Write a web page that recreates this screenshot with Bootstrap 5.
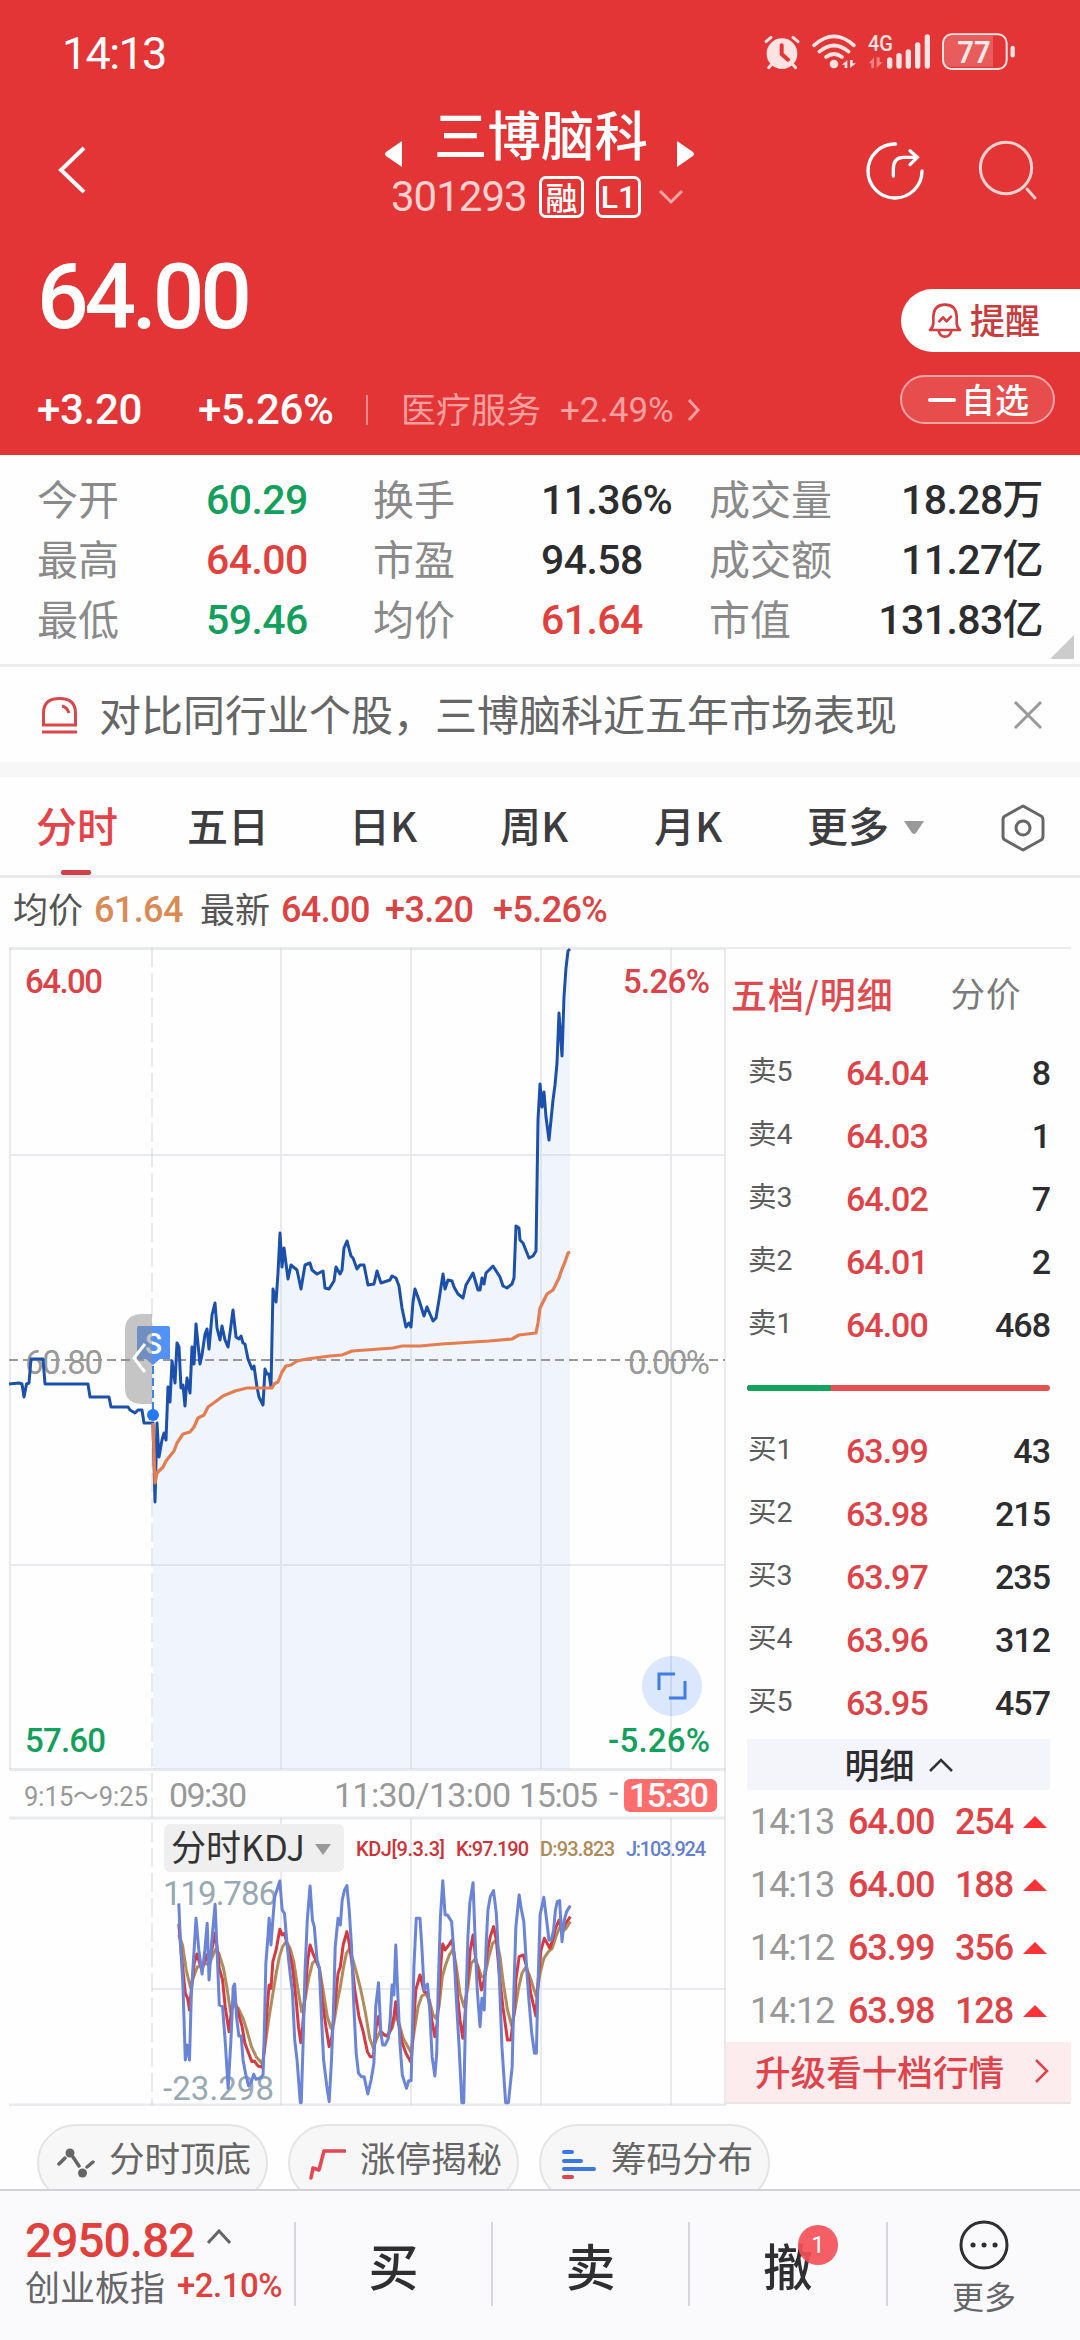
<!DOCTYPE html>
<html lang="zh-CN">
<head>
<meta charset="utf-8">
<meta name="viewport" content="width=device-width, initial-scale=1">
<title>三博脑科 301293</title>
<link href="https://cdn.jsdelivr.net/npm/bootstrap@5.3.0/dist/css/bootstrap.min.css" rel="stylesheet">
<style>
  html, body { width: 1080px; height: 2340px; overflow: hidden; }
  body { background: #fefefe; font-family: Roboto, "Noto Sans CJK SC", sans-serif; line-height: 1; color: #2d2d2f; }
  svg { display: block; flex: none; }
  .cn { font-family: "Noto Sans CJK SC", sans-serif; }
  .lab.cn, .sector.cn { padding-bottom: 5px; }
  .cells { display: grid; align-items: center; white-space: nowrap; }
  .up { color: #e2403c; }
  .down { color: #13a05c; }

  /* header */
  .quote-head { height: 455px; background: #e33536; color: #fff; }
  .status-row { height: 106px; padding: 0 62px; }
  .clock { font-size: 45px; letter-spacing: -1.7px; }
  .status-icons { margin: 0 -62px 0 0; }
  .title-row { height: 130px; grid-template-columns: 58px 326px 312px 168px 113px 1fr; }
  .name-block { margin-top: -12px; }
  .stock-name { font-size: 53.500px; font-weight: 500; margin: 0 29px 9px 32px; }
  .stock-code { font-size: 42px; letter-spacing: -1px; color: #ffd0d0; width: 148px; }
  .tagbox { width: 45px; height: 42px; border: 3px solid #fff; border-radius: 7px; font-size: 32px; font-weight: 500; margin-right: 12px; }
  .tagbox.cn { padding-bottom: 3px; }
  .big-price { font-size: 91px; font-weight: 500; letter-spacing: -4.3px; padding-left: 37px; width: 400px; }
  .remind { width: 179px; height: 63px; border-radius: 32px 0 0 32px; background: #fff; color: #c93b3c; font-size: 35px; font-weight: 500; padding: 0 0 4px 27px; }
  .watch { width: 155px; height: 49px; border-radius: 25px; border: 2px solid #f6a3a3; background: #e84d4e; font-size: 34px; font-weight: 500; padding: 0 0 2px 26px; }
  .change-row { grid-template-columns: 161px 168px 35px 159px 127px 1fr; padding-left: 37px; font-size: 42px; font-weight: 500; letter-spacing: -.3px; height: 60px; }
  .sector { font-size: 35px; color: #ff9f9f; font-weight: 400; letter-spacing: 0; }

  /* statistics */
  .stats { height: 212px; padding: 15px 37px 0; border-bottom: 3px solid #ececec; }
  .stats .cells { grid-template-columns: 169px 167px 168px 168px 131px 1fr; height: 60px; font-size: 41px; font-weight: 500; letter-spacing: -.6px; }
  .stats .lab { color: #8a8a8a; font-weight: 400; letter-spacing: 0; }
  .fold { right: 6px; top: 180px; }
  .notice { height: 95px; padding: 0 37px 0 41px; color: #666; font-size: 42px; }
  .gap-band { height: 15px; background: #f7f7f7; }

  /* period tabs */
  .period { height: 101px; grid-template-columns: 151px 162px 151px 154px 153px 96px 98px 1fr; padding-left: 36px; font-size: 41px; font-weight: 500; color: #3d3d3f; border-bottom: 3px solid #e9e9e9; }
  .period > span { padding-bottom: 4px; }
  .period .on { color: #e64349; }
  .period .on::after { content: ""; position: absolute; left: 25px; top: 66px; width: 30px; height: 5px; border-radius: 2px; background: #d3404a; }
  .legend-row { height: 69px; grid-template-columns: 81px 106px 81px 104px 108px 1fr; padding: 0 0 6px 13px; font-size: 36px; font-weight: 500; letter-spacing: -.6px; color: #dc4343; }
  .legend-row .lab { font-size: 35px; color: #555; font-weight: 400; letter-spacing: 0; }

  /* chart and order book */
  .board { height: 1159px; }
  .book { width: 354px; position: relative; }
  .book-tabs { height: 94px; padding: 0 0 5px 5px; border-top: 2px solid #ececec; margin-right: 9px; font-size: 36px; letter-spacing: .9px; color: #e04a4f; font-weight: 500; }
  .book-tabs .other { margin-left: 57px; color: #7a7a7a; font-weight: 400; font-size: 34.500px; }
  .level { height: 63px; grid-template-columns: 98px 100px 1fr; padding: 0 30px 0 22px; font-size: 34px; font-weight: 500; letter-spacing: -1px; }
  .level .lab { font-size: 28.500px; color: #5c5c5c; font-weight: 400; letter-spacing: 0; }
  .level .px { color: #df4348; }
  .ratio { width: 303px; height: 6px; margin: 29px 30px 28px 21px; border-radius: 3px; background: #e84f50; }
  .ratio .progress-bar { background: #12a35d; }
  .detail-head { height: 51px; margin: 5px 30px 0 21px; padding-bottom: 3px; background: #f3f5fa; font-size: 35px; font-weight: 500; }
  .tick { height: 63px; grid-template-columns: 98px 104px 61px 1fr; padding-left: 24px; font-size: 36px; font-weight: 500; color: #df4348; letter-spacing: -1.1px; }
  .tick svg { margin-left: 10px; }
  .tick .lab { color: #999; font-weight: 400; }
  .upgrade { height: 62px; margin-right: 9px; padding: 0 22px 2px 29px; background: #fdecee; color: #e0434a; font-size: 35.6px; font-weight: 500; border-bottom: 2px solid #e6e6e6; }

  /* tool chips and trade bar */
  .chips { height: 83px; padding: 18px 37px 0; overflow: hidden; gap: 20px; }
  .chip { width: 231px; height: 78px; flex: none; padding: 13px 0 0 18px; border: 2px solid #e4e4e4; border-radius: 39px; background: #f7f7f7; color: #666; font-size: 35.500px; }
  .chip svg { margin: 9px 14px 0 0; }
  .trade { height: 151px; background: #fafafd; border-top: 2px solid #d2d2d5; grid-template-columns: 294px 197px 197px 198px 1fr; }
  .trade > div { height: 84px; margin-top: -3px; }
  .trade > div + div { border-left: 2px solid #d8d8dc; }
  .index-val { font-size: 48px; font-weight: 500; letter-spacing: -1.1px; }
  .action { font-size: 50px; font-weight: 500; color: #2f2f31; }
  .dot { left: 108px; top: 3px; width: 40px; height: 40px; background: rgba(245,80,88,.92); font: 24px Roboto, sans-serif; }
</style>
</head>
<body>

<header class="quote-head">
  <div class="status-row d-flex align-items-center justify-content-between">
    <span class="clock">14:13</span>
    <svg class="status-icons" width="340" height="66" viewBox="0 0 1020 198" fill="none" stroke="#ffe3e3" stroke-linecap="round">
      <circle cx="126" cy="101" r="46" fill="#ffe3e3" stroke="none"/>
      <path d="M78 65L93 52M159 52L174 65M95 133L86 143M158 133L167 143" stroke-width="9"/>
      <path d="M125 76V102L144 119" stroke="#e33536" stroke-width="12"/>
      <path d="M222 76Q282 22 342 76M238 95Q282 58 326 95M258 111Q282 93 306 111" stroke-width="11"/>
      <circle cx="282" cy="132" r="13" fill="#ffe3e3" stroke="none"/>
      <path d="M306 134L322 120V144H314V134ZM330 120V144L348 130H338V120Z" fill="#ffe3e3" stroke="none"/>
      <text x="384" y="94" font-size="66" textLength="75" lengthAdjust="spacingAndGlyphs" fill="#ffe3e3" stroke="none" font-weight="500" font-family="Roboto">4G</text>
      <path d="M386 130L402 112V144H394V130ZM410 112V144L429 126H419V112Z" fill="#f08081" stroke="none"/>
      <path d="M449 120V138M477 107V138M505 96V138M533 75V138M562 51V138" stroke-width="16"/>
      <path d="M612 62Q612 48 630 48H759V140H630Q612 140 612 124Z" fill="#e95c5d" stroke="none"/>
      <rect x="609" y="43" width="191" height="104" rx="26" stroke-width="6"/>
      <path d="M818 84V106" stroke-width="13"/>
      <text x="652" y="129" font-size="96" textLength="100" lengthAdjust="spacingAndGlyphs" fill="#ffe9e9" stroke="none" font-weight="600" font-family="Roboto">77</text>
    </svg>
  </div>
  <div class="title-row cells">
    <span></span>
    <svg width="30" height="52" viewBox="0 0 30 52" fill="none" stroke="#fff" stroke-width="4"><path d="M26 3L3 25L26 47"/></svg>
    <div class="name-block d-flex flex-column align-items-start">
      <div class="d-flex align-items-end" style="height:56px">
        <svg width="18" height="28" viewBox="0 0 18 28"><path d="M18 1V27L2 16Q0 14 2 12Z" fill="#fff"/></svg>
        <span class="stock-name cn">三博脑科</span>
        <svg width="18" height="28" viewBox="0 0 18 28"><path d="M0 1V27L16 16Q18 14 16 12Z" fill="#fff"/></svg>
      </div>
      <div class="d-flex align-items-center" style="margin:8px 0 0 7px">
        <span class="stock-code">301293</span>
        <span class="tagbox cn d-flex align-items-center justify-content-center">融</span>
        <span class="tagbox d-flex align-items-center justify-content-center">L1</span>
        <svg width="26" height="16" viewBox="0 0 26 16" fill="none" stroke="#f7a5a5" stroke-width="3" style="margin-left:5px"><path d="M2 2L13 13L24 2"/></svg>
      </div>
    </div>
    <svg width="62" height="62" viewBox="0 0 186 186" fill="none" stroke="#fff" stroke-width="10" stroke-linecap="round" style="margin-left:168px"><path d="M95 12A81 81 0 1 0 174 93M88 108V88Q88 52 118 52H158M138 32L160 52L138 74"/></svg>
    <svg width="62" height="62" viewBox="0 0 186 186" fill="none" stroke="#ffd0d0" stroke-width="9" stroke-linecap="round" style="margin-left:114px"><circle cx="84" cy="84" r="77"/><path d="M147 147L171 174"/></svg>
  </div>
  <div class="d-flex justify-content-between" style="height:144px">
    <div class="big-price pt-3">64.00</div>
    <div class="remind cn d-flex align-items-center" style="margin-top:53px">
      <svg width="34" height="36" viewBox="0 0 102 108" fill="none" stroke="#d63e40" stroke-width="8" stroke-linejoin="round" stroke-linecap="round" style="margin:2px 8px 0 0"><path d="M6 84Q16 76 16 62V44Q18 8 51 8Q84 8 86 44V62Q86 76 96 84Z"/><path d="M32 86Q36 104 51 104Q66 104 70 86M34 58L45 46L56 58L69 44"/></svg>提醒
    </div>
  </div>
  <div class="d-flex justify-content-between align-items-center">
    <div class="change-row cells flex-fill">
      <span>+3.20</span><span>+5.26%</span><i style="width:2px;height:30px;background:#f08a8a"></i>
      <span class="sector cn">医疗服务</span><span class="sector">+2.49%</span>
      <svg width="14" height="26" viewBox="0 0 14 26" fill="none" stroke="#ff9f9f" stroke-width="3"><path d="M2 3L11 13L2 23"/></svg>
    </div>
    <div class="watch cn d-flex align-items-center" style="margin:-21px 25px 0 0"><i style="width:28px;height:4px;background:#fff;border-radius:2px;margin:2px 5px 0 0"></i>自选</div>
  </div>
</header>

<section class="stats position-relative">
  <div class="cells"><span class="lab cn">今开</span><span class="down">60.29</span><span class="lab cn">换手</span><span>11.36%</span><span class="lab cn">成交量</span><span class="text-end">18.28万</span></div>
  <div class="cells"><span class="lab cn">最高</span><span class="up">64.00</span><span class="lab cn">市盈</span><span>94.58</span><span class="lab cn">成交额</span><span class="text-end">11.27亿</span></div>
  <div class="cells"><span class="lab cn">最低</span><span class="down">59.46</span><span class="lab cn">均价</span><span class="up">61.64</span><span class="lab cn">市值</span><span class="text-end">131.83亿</span></div>
  <svg class="fold position-absolute" width="24" height="24" viewBox="0 0 24 24"><path d="M24 0V24H0Z" fill="#ccc"/></svg>
</section>

<section class="notice cn d-flex align-items-center">
  <svg width="37" height="38" viewBox="0 0 37 38" fill="none" stroke="#d9474d" stroke-width="3" style="margin-right:21px"><path d="M2.500 29V17Q2.500 2.500 18.500 2.500Q34.500 2.500 34.500 17V29ZM1 36H36M21 10Q26 11 28 17"/></svg>
  <span class="flex-fill pb-1">对比同行业个股，三博脑科近五年市场表现</span>
  <svg width="30" height="30" viewBox="0 0 30 30" stroke="#999" stroke-width="3"><path d="M2 2L28 28M28 2L2 28"/></svg>
</section>
<div class="gap-band"></div>

<nav class="period cells cn">
  <span class="on position-relative">分时</span><span>五日</span><span>日K</span><span>周K</span><span>月K</span><span>更多</span>
  <svg width="22" height="14" viewBox="0 0 22 14" style="margin-top:3px"><path d="M1 0H21L13 12Q11 14 9 12Z" fill="#999"/></svg>
  <svg width="44" height="48" viewBox="0 0 44 48" fill="none" stroke="#666" stroke-width="3" stroke-linejoin="round" style="margin-top:4px"><path d="M22 2L40 12Q42 13 42 16V32Q42 35 40 36L22 46L4 36Q2 35 2 32V16Q2 13 4 12Z"/><circle cx="22" cy="24" r="7"/></svg>
</nav>
<div class="legend-row cells">
  <span class="lab cn">均价</span><span style="color:#d98a55">61.64</span><span class="lab cn">最新</span><span>64.00</span><span>+3.20</span><span>+5.26%</span>
</div>

<main class="board d-flex">
  <svg width="726" height="1159" viewBox="0 947 726 1159" font-family="Roboto" fill="none">
    <!-- price area, pane grid -->
    <path fill="#eff4fd" d="M153 1769V1423L155 1502L159 1457L166 1440L168 1387L172 1361L177 1343L181 1388L185 1406L190 1393L192 1347L196 1324L200 1364L205 1334L209 1349L215 1303L220 1340L228 1347L233 1310L239 1339L245 1344L252 1369L257 1387L263 1405L265 1369L271 1387L273 1289L276 1302L280 1233L288 1279L291 1265L301 1289L305 1265L317 1274L325 1288L334 1281L347 1241L357 1269L368 1285L399 1286L406 1327L411 1327L415 1289L424 1316L433 1321L443 1274L463 1298L473 1273L480 1290L493 1266L507 1288L514 1278L516 1226L529 1258L536 1251L538 1120L540 1084L549 1140L557 1063L559 1013L562 1056L570 949V1769Z"/>
    <g stroke="#c8ccd4" stroke-opacity=".4" stroke-width="2">
      <path d="M10 948V1769M281 948V1769M411 948V1769M541 948V1769M671 948V1769M725 948V2105M9 1155H725M9 1565H725"/>
      <path d="M281 1818V2105M411 1818V2105M541 1818V2105M671 1818V2105M152 1989H725"/>
      <path d="M152 948V2105" stroke-dasharray="19 6"/>
      <path d="M9 948.500H725M9 1769.500H726M9 1818H725M9 2105H726" stroke-width="3"/>
    </g>
    <path d="M9 1360H725" stroke="#999" stroke-width="2" stroke-dasharray="9 5"/>
    <g font-size="33" font-weight="500">
      <text x="25" y="993" textLength="78" fill="#dc4348">64.00</text>
      <text x="623" y="993" textLength="87" fill="#dc4348">5.26%</text>
      <text x="25" y="1374" textLength="78" fill="#999" font-weight="400">60.80</text>
      <text x="628" y="1374" textLength="82" fill="#999" font-weight="400">0.00%</text>
      <text x="25" y="1752" textLength="81" fill="#13a05c">57.60</text>
      <text x="608" y="1752" textLength="102" fill="#13a05c">-5.26%</text>
    </g>
    <path stroke="#1b50ac" stroke-width="3" stroke-linejoin="round" d="M9 1384L19 1383L22 1384L24 1397L26.500 1384L29 1383L31 1359H43L45 1384H88L90 1397H109L111 1407H128L130 1410L135 1413L138 1410H142L144 1423H153L155 1502L157 1423L159 1457L162 1440L164 1433L166 1440L168 1387L170 1402L172 1361L175 1383L177 1343L179 1347L181 1388L183 1385L185 1406L187 1378L190 1393L192 1347L194 1364L196 1324L200 1364L202 1355L205 1334L207 1329L209 1349L212 1315L215 1303L217 1328L220 1340L222 1326L225 1340L228 1347L230 1333L233 1310L236 1337L239 1339L241 1336L243 1343L245 1344L248 1359L252 1369L254 1366L257 1387L259 1397L263 1405L265 1369L267 1374H269L271 1387L273 1289L276 1302L278 1273L280 1233L282 1267L284 1248L288 1279L291 1265L297 1270L301 1289L305 1265L310 1263L312 1270L317 1274L323 1271L325 1288L329 1289L334 1281L336 1267L340 1274L342 1270L344 1248L347 1241L351 1256L353 1258L357 1269L360 1265H364L368 1285L374 1284L377 1271L381 1283L390 1280L392 1276L396 1278L399 1286L402 1308L406 1327L409 1323L411 1327L413 1302L415 1289L419 1300L424 1316L427 1307L433 1321L436 1318L439 1300L443 1274L445 1289L448 1280L452 1281L454 1287L458 1294L463 1298L466 1285L473 1273L478 1290H480L482 1278L484 1284L486 1273L493 1266L500 1277L503 1286L507 1288L512 1284L514 1278L516 1226L519 1228L520 1240L523 1243L529 1258L533 1256L536 1251L538 1120L540 1084L542 1107L544 1092L546 1117L549 1140L553 1100L555 1085L557 1063L559 1013L562 1056L564 997L566 968L568 951L570 949"/>
    <path stroke="#e47d50" stroke-width="3.200" stroke-linejoin="round" d="M153 1423L155 1483L157 1473L163 1467L166 1461L170 1456L174 1451L177 1443L181 1437L183 1434L190 1432L194 1427L198 1418L204 1415L208 1407L215 1402L223 1396L235 1391L247 1388H272L274 1384L278 1382L282 1372L286 1366L291 1365L297 1361L307 1359L330 1356L342 1355L352 1351L393 1348L402 1346H420L442 1344L489 1341L512 1339L519 1335L536 1333L538 1323L540 1308L547 1294L553 1290L559 1278L562 1269L565 1262L568 1253L570 1252"/>
    <!-- trade marker and side handle -->
    <path d="M137 1328Q137 1326 139 1326H168Q170 1326 170 1328V1359H160L153 1365L146 1359H137Z" fill="#5292f8"/>
    <text x="145" y="1354" font-size="30" font-weight="500" textLength="17" lengthAdjust="spacingAndGlyphs" fill="#fff">S</text>
    <path d="M153 1366V1410" stroke="#3b82f0" stroke-width="2" stroke-dasharray="8 4"/>
    <circle cx="153" cy="1415" r="6" fill="#2379f7"/>
    <path d="M152 1314H143Q125 1314 125 1330V1388Q125 1404 143 1404H152Z" fill="#8c8c8c" fill-opacity=".5"/>
    <path d="M145 1344L134 1358L145 1372" stroke="#fff" stroke-width="3"/>
    <circle cx="672" cy="1686" r="30" fill="#dbe7fc"/>
    <path d="M671 1656V1716" stroke="#c8d5ec" stroke-width="2"/>
    <path d="M675 1674H659V1690M685 1681V1698H669" stroke="#3e7de6" stroke-width="3"/>
    <!-- time axis -->
    <g font-size="34" fill="#999">
      <text x="24" y="1806" font-size="27" textLength="124" lengthAdjust="spacingAndGlyphs">9:15～9:25</text>
      <text x="169" y="1807" textLength="78">09:30</text>
      <text x="334" y="1807" textLength="177">11:30/13:00</text>
      <text x="519" y="1807" textLength="79">15:05</text>
      <text x="609" y="1804">-</text>
      <rect x="624" y="1779" width="93" height="33" rx="6" fill="#ff6d6d"/>
      <text x="629" y="1807" textLength="80" fill="#fff" font-weight="500">15:30</text>
    </g>
    <!-- KDJ pane -->
    <rect x="164" y="1824" width="180" height="48" rx="6" fill="#efefef"/>
    <text x="171" y="1861" font-size="36" textLength="134" lengthAdjust="spacingAndGlyphs" fill="#333" font-family="Noto Sans CJK SC">分时KDJ</text>
    <path d="M315 1844H331L323 1855Z" fill="#999"/>
    <g font-size="20" font-weight="500">
      <text x="356" y="1856" textLength="89" fill="#cf3339">KDJ[9.3.3]</text>
      <text x="456" y="1856" textLength="73" fill="#cf3339">K:97.190</text>
      <text x="540" y="1856" textLength="75" fill="#af8a58">D:93.823</text>
      <text x="626" y="1856" textLength="80" fill="#6480ce">J:103.924</text>
    </g>
    <g font-size="33" fill="#98a9b3">
      <text x="163" y="1905" textLength="114">119.786</text>
      <text x="163" y="2100" textLength="111">-23.298</text>
    </g>
    <g transform="translate(0,1760) scale(.4656,.3333)" stroke-width="3" stroke-linejoin="round">
      <polyline vector-effect="non-scaling-stroke" stroke="#b08c5c" points="384,525 392,555 400,630 409,682 416,650 424,620 432,620 440,610 449,615 456,590 463,568 470,580 480,625 487,680 495,755 502,735 512,745 522,775 530,810 540,860 550,890 564,912 570,850 578,770 585,710 592,650 600,590 607,560 615,545 623,565 631,605 639,680 648,755 655,720 663,655 671,610 678,600 686,625 695,700 703,770 711,805 717,790 724,730 731,680 738,620 744,580 751,565 758,600 766,640 775,690 785,760 794,835 802,865 808,840 816,815 824,825 832,825 842,805 850,765 858,795 866,835 874,855 883,878 890,810 898,740 906,708 914,702 922,720 930,765 936,775 943,740 950,650 957,615 965,585 973,567 980,620 988,700 997,742 1005,680 1012,610 1020,598 1027,620 1034,650 1041,650 1050,590 1058,550 1066,540 1074,590 1081,670 1090,750 1099,798 1106,750 1113,690 1121,640 1129,622 1137,645 1145,680 1152,710 1160,640 1168,595 1178,575 1186,565 1194,530 1201,505 1208,515 1216,505 1225,485"/>
      <polyline vector-effect="non-scaling-stroke" stroke="#d53a40" points="384,492 390,590 398,700 403,715 407,750 411,690 417,610 423,582 430,615 436,620 443,585 449,615 455,570 462,520 467,570 471,625 478,660 484,745 492,815 498,740 503,715 512,760 520,800 526,850 534,880 541,905 546,903 554,918 564,922 568,860 573,760 578,675 582,685 586,605 593,570 601,508 606,525 611,520 618,560 628,620 636,720 641,800 646,848 650,800 656,690 661,600 666,555 672,580 680,605 686,625 692,720 700,800 707,860 713,830 719,740 726,640 731,620 737,555 745,515 750,550 756,610 762,690 771,770 780,815 789,875 795,890 802,890 808,800 813,770 818,815 826,825 833,830 840,805 846,770 850,725 856,790 863,845 872,880 883,908 888,800 893,690 902,645 911,695 919,700 926,770 934,830 939,790 943,700 948,590 951,552 956,570 965,553 971,540 976,590 982,700 988,780 994,835 998,780 1003,680 1010,570 1016,525 1022,600 1028,640 1034,690 1040,660 1046,580 1053,530 1060,500 1066,540 1073,650 1080,740 1085,790 1090,840 1097,840 1104,760 1108,660 1115,590 1124,585 1131,620 1140,700 1151,768 1156,660 1162,570 1169,535 1175,550 1181,565 1187,540 1193,505 1201,480 1207,515 1215,490 1225,470"/>
      <polyline vector-effect="non-scaling-stroke" stroke="#6a84d8" points="384,430 388,560 393,680 398,900 402,855 407,900 411,700 416,590 421,475 427,570 434,642 440,570 445,490 449,660 455,540 462,433 467,600 471,735 478,740 484,850 490,985 496,840 501,680 504,672 508,770 513,828 518,828 522,900 528,945 534,978 540,965 545,943 550,958 558,955 565,945 568,800 571,610 575,540 578,475 582,555 586,480 590,410 596,385 601,363 606,450 611,460 617,560 623,640 628,695 633,840 638,900 645,1028 647,1028 651,850 655,640 660,480 666,378 671,480 675,500 681,600 686,625 690,760 695,900 702,980 707,1025 712,900 716,760 720,560 726,475 731,495 735,420 740,390 745,377 750,450 755,560 760,740 765,880 770,940 776,950 782,950 790,1002 797,960 803,910 807,740 813,668 818,820 822,855 827,855 834,835 838,780 842,675 846,705 850,555 854,690 859,850 864,945 873,985 878,962 883,962 886,800 889,620 894,475 902,475 906,560 911,690 918,672 923,750 928,890 934,948 938,880 941,690 946,470 951,362 956,465 961,465 970,485 975,580 981,740 986,860 992,1028 996,1028 1000,760 1005,530 1009,430 1016,368 1021,560 1025,690 1031,800 1035,715 1040,750 1044,560 1048,450 1053,410 1060,392 1066,460 1071,600 1078,860 1086,1028 1092,1028 1100,920 1104,680 1108,500 1115,405 1120,450 1125,485 1130,600 1136,720 1142,820 1148,880 1152,880 1155,700 1160,465 1168,412 1174,480 1179,540 1184,540 1189,510 1193,450 1197,425 1202,422 1207,545 1212,480 1217,455 1225,437"/>
    </g>
  </svg>

  <aside class="book">
    <div class="book-tabs cn d-flex align-items-center">五档/明细<span class="other">分价</span></div>
    <div class="level cells"><span class="lab">卖5</span><span class="px">64.04</span><span class="text-end">8</span></div>
    <div class="level cells"><span class="lab">卖4</span><span class="px">64.03</span><span class="text-end">1</span></div>
    <div class="level cells"><span class="lab">卖3</span><span class="px">64.02</span><span class="text-end">7</span></div>
    <div class="level cells"><span class="lab">卖2</span><span class="px">64.01</span><span class="text-end">2</span></div>
    <div class="level cells"><span class="lab">卖1</span><span class="px">64.00</span><span class="text-end">468</span></div>
    <div class="ratio progress"><div class="progress-bar" style="width:27.700%"></div></div>
    <div class="level cells"><span class="lab">买1</span><span class="px">63.99</span><span class="text-end">43</span></div>
    <div class="level cells"><span class="lab">买2</span><span class="px">63.98</span><span class="text-end">215</span></div>
    <div class="level cells"><span class="lab">买3</span><span class="px">63.97</span><span class="text-end">235</span></div>
    <div class="level cells"><span class="lab">买4</span><span class="px">63.96</span><span class="text-end">312</span></div>
    <div class="level cells"><span class="lab">买5</span><span class="px">63.95</span><span class="text-end">457</span></div>
    <div class="detail-head cn d-flex align-items-center justify-content-center">明细
      <svg width="24" height="14" viewBox="0 0 24 14" fill="none" stroke="#333" stroke-width="2.500" style="margin:3px 0 0 14px"><path d="M1 13L12 2L23 13"/></svg></div>
    <div class="tick cells"><span class="lab">14:13</span><span>64.00</span><span class="text-end">254</span><svg width="24" height="12" viewBox="0 0 24 12"><path d="M12 0L24 12H0Z" fill="#fb3236"/></svg></div>
    <div class="tick cells"><span class="lab">14:13</span><span>64.00</span><span class="text-end">188</span><svg width="24" height="12" viewBox="0 0 24 12"><path d="M12 0L24 12H0Z" fill="#fb3236"/></svg></div>
    <div class="tick cells"><span class="lab">14:12</span><span>63.99</span><span class="text-end">356</span><svg width="24" height="12" viewBox="0 0 24 12"><path d="M12 0L24 12H0Z" fill="#fb3236"/></svg></div>
    <div class="tick cells"><span class="lab">14:12</span><span>63.98</span><span class="text-end">128</span><svg width="24" height="12" viewBox="0 0 24 12"><path d="M12 0L24 12H0Z" fill="#fb3236"/></svg></div>
    <div class="upgrade cn d-flex align-items-center justify-content-between">升级看十档行情
      <svg width="14" height="24" viewBox="0 0 14 24" fill="none" stroke="#e0434a" stroke-width="2.500"><path d="M1 1L12 12L1 23"/></svg></div>
  </aside>
</main>

<section class="chips cn d-flex">
  <div class="chip d-flex align-items-start"><svg width="38" height="30" viewBox="0 0 38 30" fill="none" stroke="#666" stroke-width="3.500" stroke-linecap="round"><path d="M2 16L8 10M16 9L22 18M30 19L36 14"/><circle cx="13" cy="5" r="4.500" fill="#666" stroke="none"/><circle cx="25.500" cy="25" r="4.500" fill="#666" stroke="none"/></svg>分时顶底</div>
  <div class="chip d-flex align-items-start"><svg width="38" height="32" viewBox="-1 0 38 32" fill="none" stroke="#e8454f" stroke-width="3.500" stroke-linecap="round" stroke-linejoin="round"><path d="M2 30L4 20L10 22L15 3H36"/></svg>涨停揭秘</div>
  <div class="chip d-flex align-items-start"><svg width="38" height="32" viewBox="0 0 38 32" stroke-width="4" stroke-linecap="round"><path d="M5 4H13M5 13H22M5 21H35" stroke="#3a78e4"/><path d="M5 29H13" stroke="#e04650"/></svg>筹码分布</div>
</section>

<footer class="trade cells">
  <div>
    <div class="d-flex align-items-center up" style="padding-left:25px;height:46px;margin-top:-4px"><span class="index-val">2950.82</span>
      <svg width="24" height="16" viewBox="0 0 24 16" fill="none" stroke="#666" stroke-width="3" style="margin:-8px 0 0 13px"><path d="M1 14L12 2L23 14"/></svg></div>
    <div class="d-flex align-items-center" style="padding-left:25px;height:42px"><span class="cn" style="font-size:35px;color:#66666a">创业板指</span><span class="up" style="font-size:33px;font-weight:500;letter-spacing:-.5px;margin-left:12px">+2.10%</span></div>
  </div>
  <div class="action cn d-flex align-items-center justify-content-center">买</div>
  <div class="action cn d-flex align-items-center justify-content-center">卖</div>
  <div class="action cn d-flex align-items-center justify-content-center position-relative">撤<span class="dot position-absolute rounded-circle text-white d-flex align-items-center justify-content-center">1</span></div>
  <div class="cn d-flex flex-column align-items-center" style="font-size:32px;color:#66666a">
    <svg width="50" height="50" viewBox="0 0 50 50" fill="none" stroke="#2f2f31" stroke-width="3" style="margin:-2px 0 9px"><circle cx="25" cy="25" r="23"/><path d="M14 25h.1M25 25h.1M36 25h.1" stroke-width="5" stroke-linecap="round"/></svg>更多</div>
</footer>

<script src="https://cdn.jsdelivr.net/npm/bootstrap@5.3.0/dist/js/bootstrap.bundle.min.js"></script>
</body>
</html>
